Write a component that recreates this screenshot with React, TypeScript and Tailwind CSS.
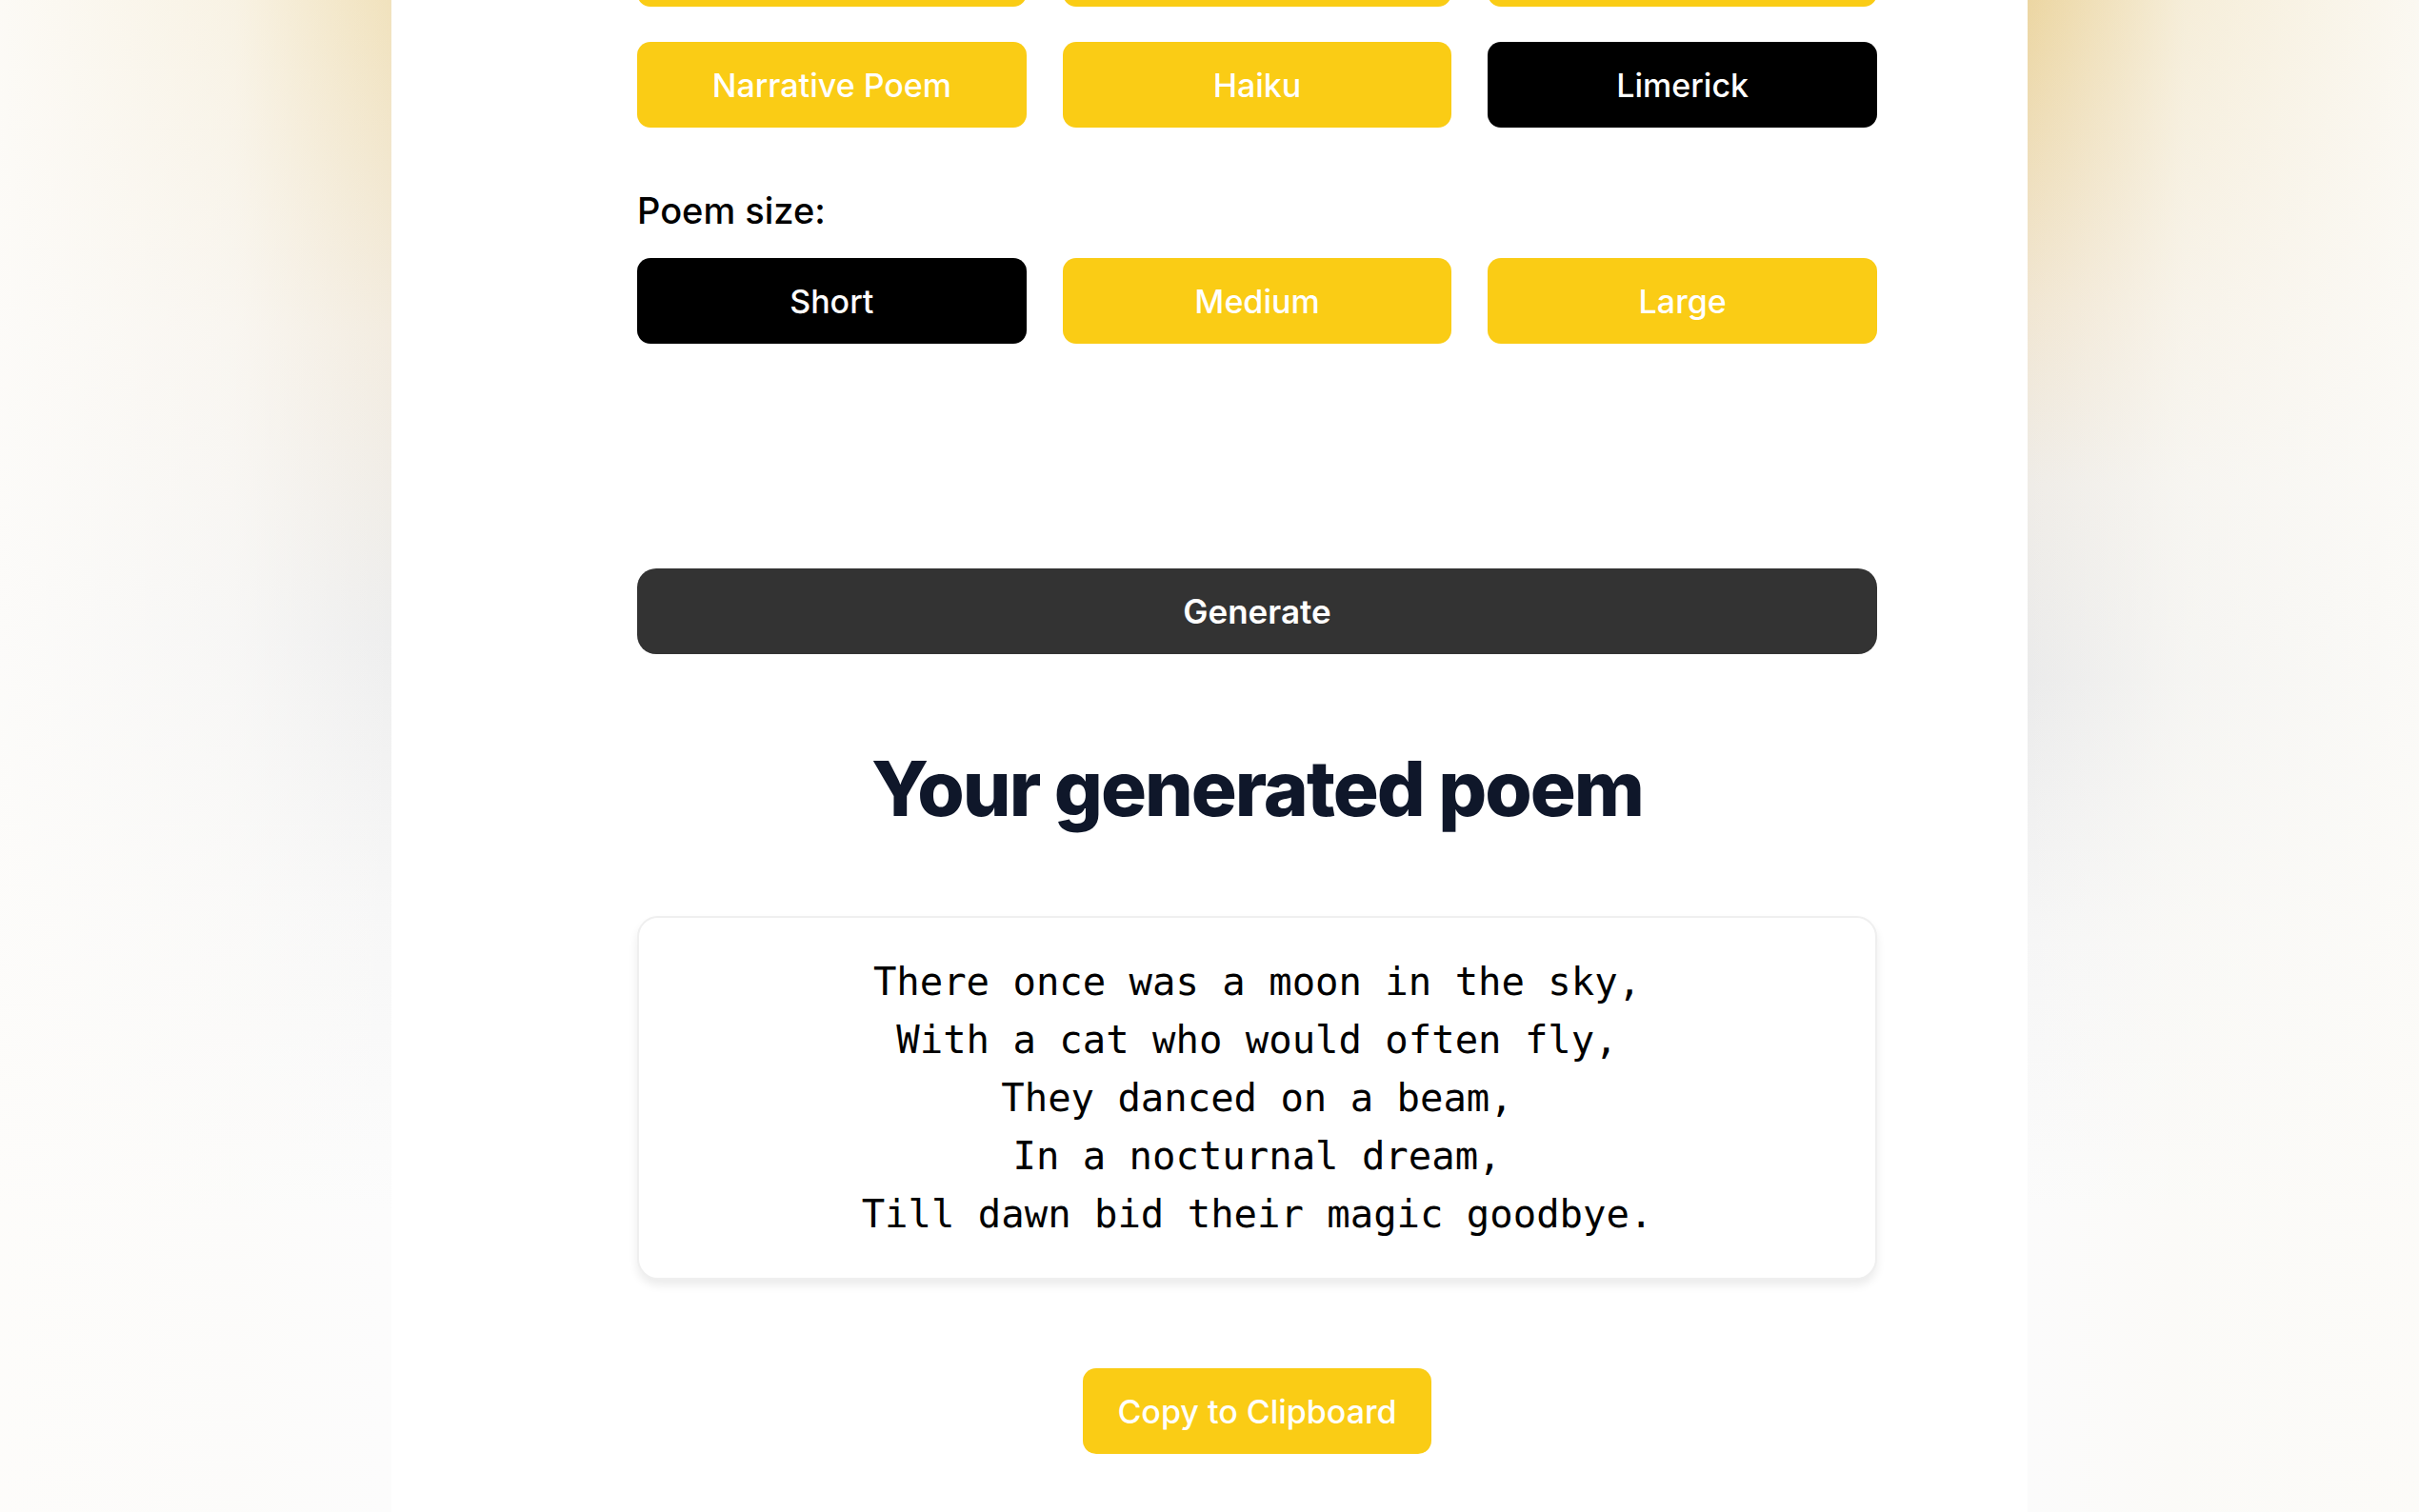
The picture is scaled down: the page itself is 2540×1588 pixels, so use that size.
import React from 'react';

const styles = ['Narrative Poem', 'Haiku', 'Limerick'];
const sizes = ['Short', 'Medium', 'Large'];

const poem = [
  'There once was a moon in the sky,',
  'With a cat who would often fly,',
  'They danced on a beam,',
  'In a nocturnal dream,',
  'Till dawn bid their magic goodbye.',
];

const OptionButton: React.FC<{ label?: string; active?: boolean }> = ({ label, active }) => (
  <button
    className={
      active
        ? 'h-[90px] rounded-[14px] bg-black text-white text-[34px] font-medium'
        : 'h-[90px] rounded-[14px] bg-[#facc15] text-white text-[34px] font-medium'
    }
  >
    {label}
  </button>
);

const App: React.FC = () => {
  return (
    <div className="flex w-full h-[1588px] overflow-hidden bg-white font-['Inter','Liberation_Sans',sans-serif]">
      <div className="relative w-[411px] shrink-0 bg-[linear-gradient(180deg,#f1e2bd_0%,#f3ece0_22%,#eeeeee_42%,#f7f7f7_60%,#fcfcfc_80%)]">
        <div className="absolute inset-0 bg-[linear-gradient(270deg,rgba(255,255,255,0)_0%,rgba(252,251,249,0.65)_40%,rgba(253,252,250,0.92)_100%)]" />
      </div>

      <main className="flex-1 bg-white pl-[258px] pr-[158px]">
        <div className="flex flex-col w-[1302px]">
          {/* previous row, scrolled mostly out of view */}
          <div className="grid grid-cols-3 gap-[38px] mt-[-83px]">
            <OptionButton />
            <OptionButton />
            <OptionButton />
          </div>

          <div className="grid grid-cols-3 gap-[38px] mt-[37px]">
            {styles.map((s) => (
              <OptionButton key={s} label={s} active={s === 'Limerick'} />
            ))}
          </div>

          <p className="mt-[64px] text-[38px] leading-[46px] font-medium text-black">Poem size:</p>

          <div className="grid grid-cols-3 gap-[38px] mt-[27px]">
            {sizes.map((s) => (
              <OptionButton key={s} label={s} active={s === 'Short'} />
            ))}
          </div>

          <button className="mt-[236px] h-[90px] rounded-[20px] bg-[#333333] text-white text-[35px] font-semibold">
            Generate
          </button>

          <h2 className="mt-[92px] text-center text-[80px] leading-[97px] font-extrabold tracking-tight text-[#0f172a]">
            Your generated poem
          </h2>

          <div className="mt-[86px] rounded-[22px] border-2 border-[#efefef] bg-white px-10 pt-[37px] pb-[36px] shadow-[0_6px_10px_rgba(0,0,0,0.08)]">
            <div className="text-center font-['DejaVu_Sans_Mono',monospace] text-[40.6px] leading-[61px] text-black">
              {poem.map((line) => (
                <div key={line}>{line}</div>
              ))}
            </div>
          </div>

          <div className="flex justify-center mt-[93px]">
            <button className="h-[90px] px-9 rounded-[14px] bg-[#facc15] text-white text-[34px] font-medium">
              Copy to Clipboard
            </button>
          </div>
        </div>
      </main>

      <div className="relative w-[411px] shrink-0 bg-[linear-gradient(180deg,#ecd6a2_0%,#f1e6d2_20%,#efece7_32%,#ebebeb_45%,#f6f6f6_62%,#fbfbfb_80%)]">
        <div className="absolute inset-0 bg-[linear-gradient(90deg,rgba(255,255,255,0)_0%,rgba(251,250,246,0.65)_40%,rgba(252,251,248,0.92)_100%)]" />
      </div>
    </div>
  );
};

export default App;
